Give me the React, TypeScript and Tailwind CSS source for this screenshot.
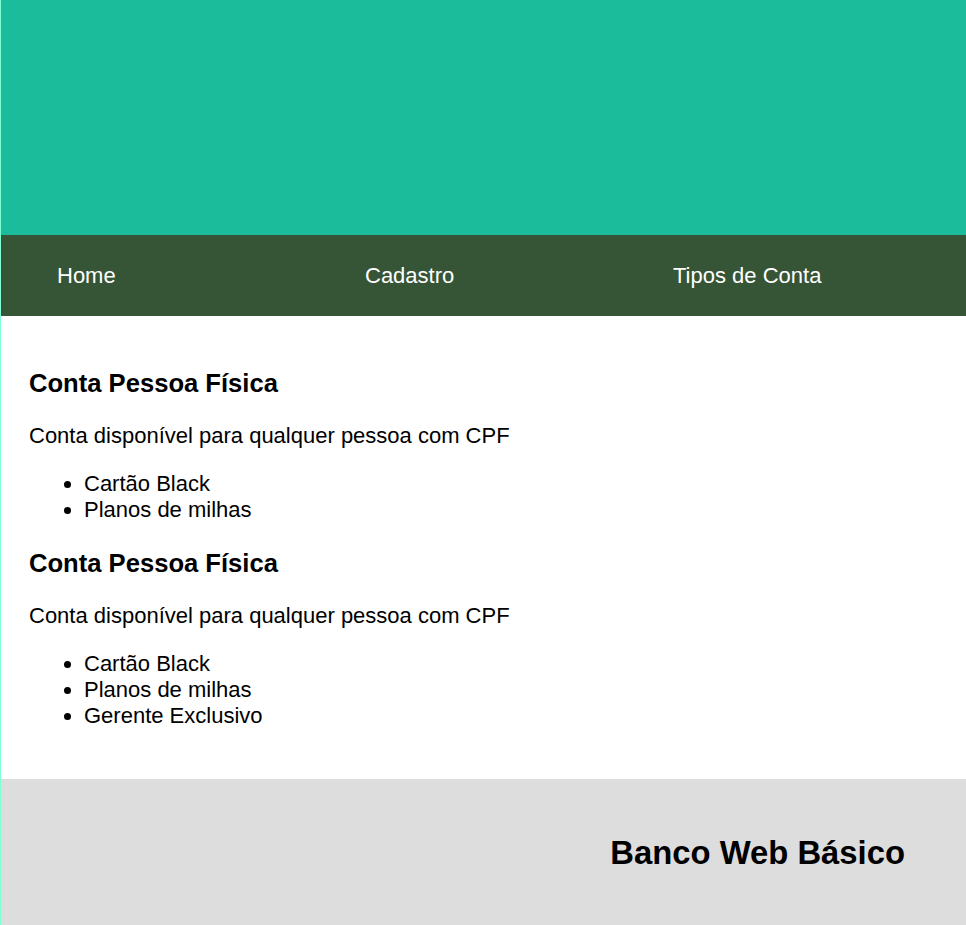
import React from 'react';

const planos = [
  { titulo: 'Conta Pessoa Física', descricao: 'Conta disponível para qualquer pessoa com CPF', itens: ['Cartão Black', 'Planos de milhas'] },
  { titulo: 'Conta Pessoa Física', descricao: 'Conta disponível para qualquer pessoa com CPF', itens: ['Cartão Black', 'Planos de milhas', 'Gerente Exclusivo'] },
];

const App = () => {
  return (
    <div className="border-l border-[#7fffd4] bg-white text-black" style={{ fontFamily: '"Liberation Sans", Arial, sans-serif' }}>
      <header className="h-[235px] bg-[#1abc9c]" />

      <nav className="h-[81px] bg-[#365536] flex items-center pl-[56px]">
        {['Home', 'Cadastro', 'Tipos de Conta'].map((link) => (
          <a key={link} href="#" className="w-[308px] shrink-0 text-white text-[22px] leading-[25px]">
            {link}
          </a>
        ))}
      </nav>

      <main className="px-[28px] pt-[53px] pb-[50px]">
        {planos.map((plano, i) => (
          <section key={i} className={i > 0 ? 'mt-[26px]' : ''}>
            <h2 className="text-[25.6px] leading-[29px] font-bold">{plano.titulo}</h2>
            <p className="mt-[25px] text-[22px] leading-[26px]">{plano.descricao}</p>
            <ul className="mt-[22px] list-disc pl-[55px] text-[22px] leading-[26px]">
              {plano.itens.map((item) => (
                <li key={item}>{item}</li>
              ))}
            </ul>
          </section>
        ))}
      </main>

      <footer className="h-[146px] bg-[#dddddd] flex items-center justify-end pr-[61px] pt-[2px]">
        <h1 className="text-[32.8px] leading-[38px] font-bold">Banco Web Básico</h1>
      </footer>
    </div>
  );
};

export default App;
